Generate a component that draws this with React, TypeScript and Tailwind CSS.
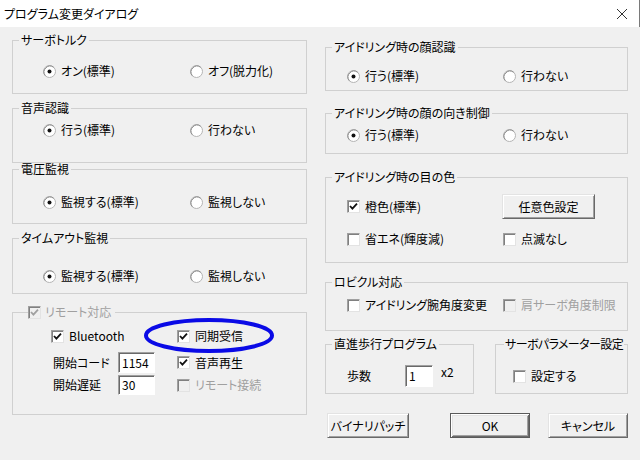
import type { ReactNode } from "react"

function Radio({ checked }: { checked?: boolean }) {
  return (
    <svg width="13" height="13" viewBox="0 0 13 13" className="shrink-0">
      <circle cx="6.5" cy="6.5" r="6" fill="#fff" stroke="#b4b4b4" />
      <path d="M2.3 10.7 A6 6 0 0 1 10.7 2.3" fill="none" stroke="#8a8a8a" />
      {checked && <circle cx="6.5" cy="6.5" r="2" fill="#111" />}
    </svg>
  )
}

function Check({ checked, disabled }: { checked?: boolean; disabled?: boolean }) {
  return (
    <span
      className={`flex h-[13px] w-[13px] shrink-0 items-center justify-center border border-t-[#a0a0a0] border-l-[#a0a0a0] border-r-[#e3e3e3] border-b-[#e3e3e3] shadow-[inset_1px_1px_0_#808080] ${
        disabled ? "bg-[#f0f0f0]" : "bg-white"
      }`}
    >
      {checked && (
        <svg width="9" height="9" viewBox="0 0 9 9">
          <path d="M1 4 L3.4 6.6 L8 1.6" fill="none" stroke={disabled ? "#a0a0a0" : "#111"} strokeWidth="1.8" />
        </svg>
      )}
    </span>
  )
}

function Opt({ label, checked, className = "" }: { label: string; checked?: boolean; className?: string }) {
  return (
    <div className={`flex h-[14px] items-center gap-[5px] leading-[14px] ${className}`}>
      <Radio checked={checked} />
      <span className="whitespace-nowrap">{label}</span>
    </div>
  )
}

function Box({
  label,
  checked,
  disabled,
  className = "",
}: {
  label: string
  checked?: boolean
  disabled?: boolean
  className?: string
}) {
  return (
    <div className={`flex h-[14px] items-center gap-[5px] leading-[14px] ${className}`}>
      <Check checked={checked} disabled={disabled} />
      <span className={`whitespace-nowrap ${disabled ? "text-[#a0a0a0]" : ""}`}>{label}</span>
    </div>
  )
}

function Group({
  title,
  className = "",
  legendClass = "ml-[6px] px-[2px]",
  children,
}: {
  title: ReactNode
  className?: string
  legendClass?: string
  children: ReactNode
}) {
  return (
    <fieldset className={`min-w-0 border border-[#d0d0d0] ${className}`}>
      <legend className={`h-[12px] whitespace-nowrap leading-[12px] ${legendClass}`}>{title}</legend>
      {children}
    </fieldset>
  )
}

function Btn({ children, className = "", def }: { children: ReactNode; className?: string; def?: boolean }) {
  return (
    <div
      className={`flex h-[25px] items-center justify-center whitespace-nowrap bg-[#f0f0f0] leading-[14px] ${
        def
          ? "border border-[#5a5a5a] shadow-[inset_1px_1px_0_#ffffff,inset_-1px_-1px_0_#696969,inset_2px_2px_0_#e3e3e3,inset_-2px_-2px_0_#a0a0a0]"
          : "border border-t-[#e3e3e3] border-l-[#e3e3e3] border-r-[#696969] border-b-[#696969] shadow-[inset_1px_1px_0_#ffffff,inset_-1px_-1px_0_#a0a0a0]"
      } ${className}`}
    >
      {children}
    </div>
  )
}

function Field({ value, className = "" }: { value: string; className?: string }) {
  return (
    <div
      className={`border border-t-[#a0a0a0] border-l-[#a0a0a0] border-r-white border-b-white bg-white pl-[3px] shadow-[inset_1px_1px_0_#696969] ${className}`}
    >
      {value}
    </div>
  )
}

export default function App() {
  return (
    <div className="h-[460px] w-[640px] overflow-hidden bg-[#f0f0f0] text-[12px] text-black [font-family:'Noto_Sans_CJK_JP',sans-serif] [font-feature-settings:'palt']">
      {/* タイトルバー */}
      <div className="flex h-[27px] items-center border-r border-[#7a7a7a] bg-white pl-[4px] text-[12px]">
        <span>プログラム変更ダイアログ</span>
        <svg width="12" height="12" viewBox="0 0 12 12" className="ml-auto mr-[11px]">
          <path d="M1 1 L11 11 M11 1 L1 11" stroke="#333" strokeWidth="1" />
        </svg>
      </div>

      <div className="flex px-[12px]">
        {/* 左列 */}
        <div className="flex w-[295px] flex-col pt-[7px]">
          <Group title="サーボトルク" className="h-[60px]">
            <div className="flex pl-[30px] pt-[18px]">
              <Opt label="オン(標準)" checked className="w-[147px]" />
              <Opt label="オフ(脱力化)" />
            </div>
          </Group>

          <Group title="音声認識" className="mt-[8px] h-[61px]">
            <div className="flex pl-[30px] pt-[9px]">
              <Opt label="行う(標準)" checked className="w-[147px]" />
              <Opt label="行わない" />
            </div>
          </Group>

          <Group title="電圧監視" className="h-[61px]">
            <div className="flex pl-[30px] pt-[20px]">
              <Opt label="監視する(標準)" checked className="w-[147px]" />
              <Opt label="監視しない" />
            </div>
          </Group>

          <Group title="タイムアウト監視" className="mt-[8px] h-[62px]">
            <div className="flex pl-[30px] pt-[25px]">
              <Opt label="監視する(標準)" checked className="w-[147px]" />
              <Opt label="監視しない" />
            </div>
          </Group>

          <fieldset className="mt-[12px] h-[109px] min-w-0 border border-[#d0d0d0]">
            <legend className="ml-[15px] flex h-[12px] items-center gap-[4px] pr-[4px] leading-[12px] text-[#a0a0a0]">
              <Check checked disabled />
              <span className="whitespace-nowrap">リモート対応</span>
            </legend>
            <div className="relative pl-[38px] pt-[11px]">
              <div className="flex h-[14px] items-center">
                <Box label="Bluetooth" checked className="w-[126px]" />
                <Box label="同期受信" checked />
              </div>
              <div className="mt-[9px] flex h-[21px] items-center">
                <div className="flex w-[126px] items-center pl-[2px]">
                  <span className="w-[65px] whitespace-nowrap">開始コード</span>
                  <Field value="1154" className="h-[21px] w-[37px] leading-[19px]" />
                </div>
                <Box label="音声再生" checked />
              </div>
              <div className="mt-[2px] flex h-[20px] items-center">
                <div className="flex w-[126px] items-center pl-[2px]">
                  <span className="w-[65px] whitespace-nowrap">開始遅延</span>
                  <Field value="30" className="h-[20px] w-[37px] leading-[18px]" />
                </div>
                <Box label="リモート接続" disabled />
              </div>

              {/* 注目の楕円 */}
              <svg width="130" height="35" viewBox="0 0 130 35" className="absolute left-[131px] top-0">
                <ellipse cx="65" cy="17.5" rx="63" ry="15.5" fill="none" stroke="#0a0ae6" strokeWidth="4" />
              </svg>
            </div>
          </fieldset>
        </div>

        {/* 右列 */}
        <div className="ml-[18px] flex w-[303px] flex-col pt-[14px]">
          <Group title="アイドリング時の顔認識" className="h-[50px]">
            <div className="flex pl-[21px] pt-[16px]">
              <Opt label="行う(標準)" checked className="w-[156px]" />
              <Opt label="行わない" />
            </div>
          </Group>

          <Group title="アイドリング時の顔の向き制御" className="mt-[16px] h-[47px]">
            <div className="flex pl-[21px] pt-[9px]">
              <Opt label="行う(標準)" checked className="w-[156px]" />
              <Opt label="行わない" />
            </div>
          </Group>

          <Group title="アイドリング時の目の色" className="mt-[17px] h-[92px]">
            <div className="pl-[21px] pt-[11px]">
              <div className="flex h-[25px] items-center">
                <Box label="橙色(標準)" checked className="w-[155px]" />
                <Btn className="w-[93px]">任意色設定</Btn>
              </div>
              <div className="mt-[13px] flex">
                <Box label="省エネ(輝度減)" className="w-[156px]" />
                <Box label="点滅なし" />
              </div>
            </div>
          </Group>

          <Group title="ロビクル対応" className="mt-[13px] h-[55px]">
            <div className="flex pl-[21px] pt-[10px]">
              <Box label="アイドリング腕角度変更" className="w-[156px]" />
              <Box label="肩サーボ角度制限" disabled />
            </div>
          </Group>

          <div className="mt-[7px] flex">
            <Group title="直進歩行プログラム" className="h-[56px] w-[149px]">
              <div className="flex pl-[21px] pt-[15px]">
                <span className="flex h-[22px] w-[58px] items-center">歩数</span>
                <Field value="1" className="h-[22px] w-[28px] leading-[20px]" />
                <span className="ml-[8px] leading-[14px]">x2</span>
              </div>
            </Group>
            <Group
              title="サーボパラメーター設定"
              legendClass="ml-[8px] px-[1px] tracking-[-0.6px]"
              className="ml-[21px] h-[56px] w-[133px]"
            >
              <div className="pl-[17px] pt-[19px]">
                <Box label="設定する" />
              </div>
            </Group>
          </div>

          <div className="mt-[19px] flex">
            <Btn className="ml-[2px] w-[82px]">バイナリパッチ</Btn>
            <Btn def className="ml-[41px] w-[80px]">
              OK
            </Btn>
            <Btn className="ml-[18px] w-[80px]">キャンセル</Btn>
          </div>
        </div>
      </div>
    </div>
  )
}
